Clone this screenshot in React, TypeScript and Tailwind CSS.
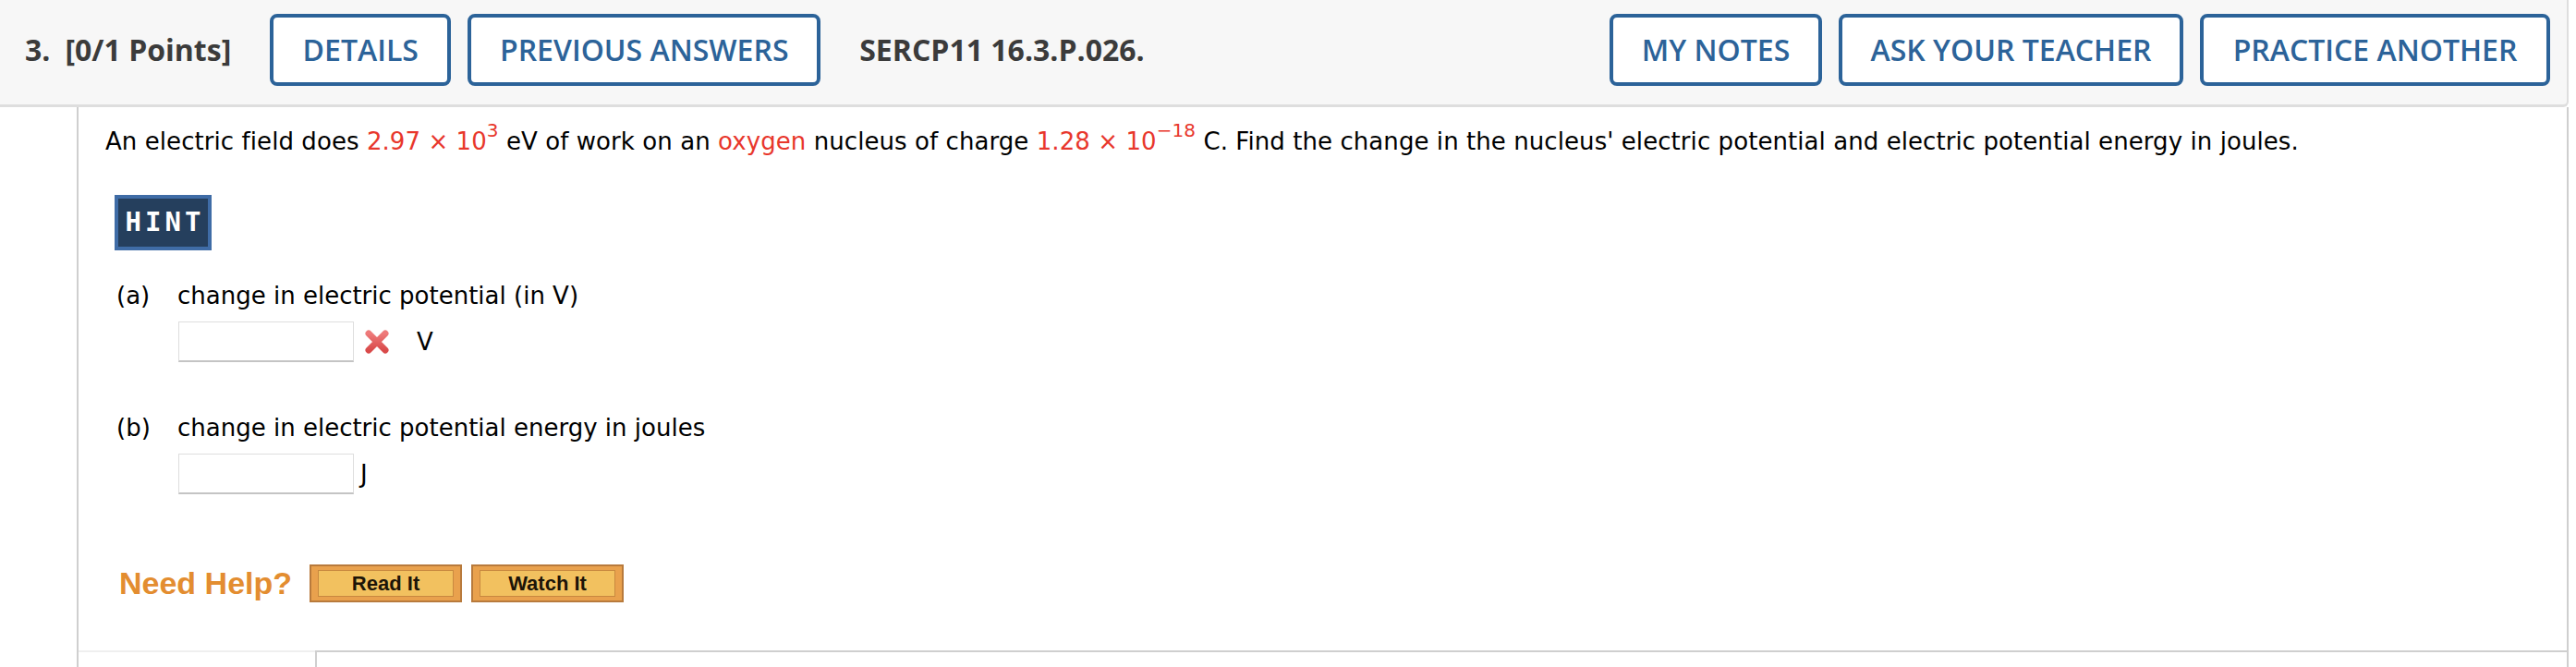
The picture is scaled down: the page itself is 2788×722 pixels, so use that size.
import React from "react";

const headerButtons = [
  { label: "MY NOTES", w: "w-[230px]" },
  { label: "ASK YOUR TEACHER", w: "w-[373px]" },
  { label: "PRACTICE ANOTHER", w: "w-[379px]" },
];

function HeaderButton({ label, className }: { label: string; className: string }) {
  return (
    <div
      className={`flex h-[78px] items-center justify-center rounded-[8px] border-[4px] border-[#2c6399] bg-white text-[32px] font-semibold text-[#2c6399] ${className}`}
    >
      {label}
    </div>
  );
}

function WrongMark() {
  return (
    <svg width="28" height="26" viewBox="0 0 28 26" className="ml-[11px]">
      <defs>
        <linearGradient id="xg" x1="0" y1="0" x2="0" y2="1">
          <stop offset="0" stopColor="#ee7a7a" />
          <stop offset="1" stopColor="#d94a4a" />
        </linearGradient>
      </defs>
      <path d="M5 4 L23 22 M23 4 L5 22" stroke="url(#xg)" strokeWidth="7" strokeLinecap="round" />
    </svg>
  );
}

function HelpButton({ label }: { label: string }) {
  return (
    <div className="flex h-[41px] w-[165px] border-[2px] border-[#b87a3c] bg-[#e9a14d] px-[7px] py-[4px]">
      <div className="flex flex-1 items-center justify-center border border-[#c8893f] bg-[#f2c15f] font-['Liberation_Sans',sans-serif] text-[22px] font-bold text-[#1c1408]">
        {label}
      </div>
    </div>
  );
}

function AnswerInput() {
  return <div className="h-[44px] w-[190px] border border-[#dedede] border-b-2 border-b-[#c4c4c4] bg-white" />;
}

export default function App() {
  return (
    <div className="h-[722px] w-[2788px] overflow-hidden bg-white font-['DejaVu_Sans',sans-serif] text-black">
      <header className="flex h-[116px] w-[2780px] items-start rounded-br-[6px] border-r-2 border-b-[3px] border-[#dedede] bg-[#f7f7f7] pt-[15px] font-['Open_Sans',sans-serif] text-[#3b3b3b]">
        <div className="flex h-[78px] items-center pl-[27px] text-[32px] font-bold">
          <span>3.</span>
          <span className="ml-[16px]">[0/1 Points]</span>
        </div>
        <HeaderButton label="DETAILS" className="ml-[42px] w-[196px]" />
        <HeaderButton label="PREVIOUS ANSWERS" className="ml-[18px] w-[382px]" />
        <div className="ml-[42px] flex h-[78px] items-center text-[32px] font-bold">SERCP11 16.3.P.026.</div>
        <div className="ml-auto flex gap-[18px] pr-[18px]">
          {headerButtons.map((b) => (
            <HeaderButton key={b.label} label={b.label} className={b.w} />
          ))}
        </div>
      </header>

      <div className="ml-[83px] flex h-[606px] w-[2697px] flex-col border-x-2 border-[#cfcfcf]">
        <p className="mt-[22px] pl-[29px] text-[26px] leading-[30px] tracking-[0.07px]">
          An electric field does{" "}
          <span className="text-[#e8372c]">
            2.97 × 10<sup className="top-[-0.7em] text-[20px]">3</sup>
          </span>{" "}
          eV of work on an <span className="text-[#e8372c]">oxygen</span> nucleus of charge{" "}
          <span className="text-[#e8372c]">
            1.28 × 10<sup className="top-[-0.7em] text-[20px]">−18</sup>
          </span>{" "}
          C. Find the change in the nucleus' electric potential and electric potential energy in joules.
        </p>

        <div className="mt-[43px] ml-[39px] flex h-[60px] w-[105px] items-center justify-center border-[4px] border-[#3f6ca6] bg-[#253f5d] pl-[4px] font-['DejaVu_Sans_Mono',monospace] text-[29px] font-bold tracking-[4px] text-white">
          HINT
        </div>

        <div className="mt-[34px] ml-[41px] flex text-[26px] leading-[30px]">
          <span className="w-[66px]">(a)</span>
          <span>change in electric potential (in V)</span>
        </div>
        <div className="mt-[13px] ml-[108px] flex items-center text-[26px]">
          <AnswerInput />
          <WrongMark />
          <span className="ml-[29px]">V</span>
        </div>

        <div className="mt-[56px] ml-[41px] flex text-[26px] leading-[30px]">
          <span className="w-[66px]">(b)</span>
          <span>change in electric potential energy in joules</span>
        </div>
        <div className="mt-[13px] ml-[108px] flex items-center text-[26px]">
          <AnswerInput />
          <span className="ml-[7px]">J</span>
        </div>

        <div className="mt-[76px] ml-[44px] flex h-[41px] items-center">
          <span className="mr-[19px] font-['Liberation_Sans',sans-serif] text-[34px] leading-[41px] font-bold text-[#e38d30]">
            Need Help?
          </span>
          <HelpButton label="Read It" />
          <div className="w-[10px]" />
          <HelpButton label="Watch It" />
        </div>

        <div className="mt-auto flex h-[18px]">
          <div className="w-[256px] border-t-2 border-[#efefef]" />
          <div className="flex-1 border-t-2 border-l-2 border-[#cfcfcf]" />
        </div>
      </div>
    </div>
  );
}
